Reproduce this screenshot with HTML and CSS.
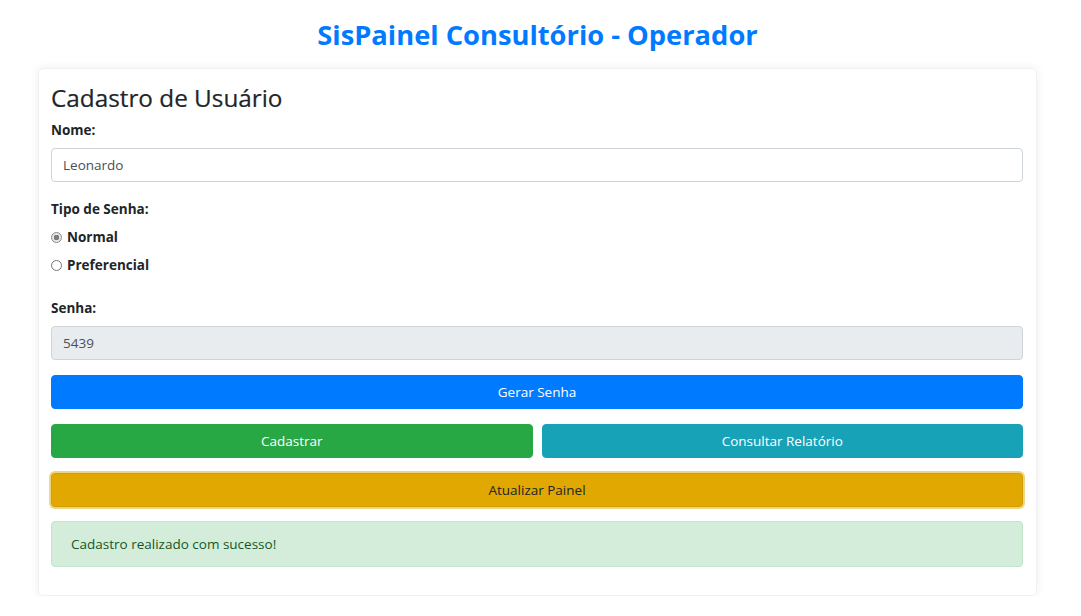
FILE: index.html
```html
<!DOCTYPE html>
<html lang="pt-BR">
<head>
<meta charset="utf-8">
<title>SisPainel Consultório - Operador</title>
<link rel="stylesheet" href="styles.css">
</head>
<body>
  <h1 class="page-title">SisPainel Consultório - Operador</h1>
  <div class="card">
    <h2 class="card-title">Cadastro de Usuário</h2>
    <div class="field">
      <label class="label" for="nome">Nome:</label>
      <input id="nome" class="input" type="text" value="Leonardo">
    </div>
    <div class="field radios">
      <div class="label">Tipo de Senha:</div>
      <label class="radio"><input type="radio" name="tipo" checked> Normal</label>
      <label class="radio"><input type="radio" name="tipo"> Preferencial</label>
    </div>
    <div class="field senha">
      <label class="label" for="senha">Senha:</label>
      <input id="senha" class="input readonly" type="text" value="5439" readonly>
    </div>
    <button class="btn btn-primary">Gerar Senha</button>
    <div class="btn-row">
      <button class="btn btn-success">Cadastrar</button>
      <button class="btn btn-info">Consultar Relatório</button>
    </div>
    <button class="btn btn-warning">Atualizar Painel</button>
    <div class="alert">Cadastro realizado com sucesso!</div>
  </div>
</body>
</html>
```
FILE: styles.css
```css
* { box-sizing: border-box; }
body {
  margin: 0;
  padding: 0 44px 0 38px;
  background: #fff;
  font-family: "Open Sans", "Noto Sans", sans-serif;
  font-size: 14px;
  color: #212529;
}
.page-title {
  margin: 0;
  padding: 14px 0 12px;
  text-align: center;
  color: #007bff;
  font-size: 27.3px;
  line-height: 42px;
  font-weight: 700;
}
.card {
  border: 1px solid #f1f1f1;
  border-radius: 5px;
  box-shadow: 0 0 10px rgba(0,0,0,0.07);
  padding: 13px 13px 28px 12px;
  display: flex;
  flex-direction: column;
}
.card-title {
  margin: 0 0 6px;
  font-size: 24.3px;
  font-weight: 500;
  line-height: 32px;
  color: #212529;
  -webkit-text-stroke: 0.2px #212529;
}
.field { display: flex; flex-direction: column; }
.label {
  font-weight: 700;
  font-size: 13.5px;
  line-height: 20px;
  margin-bottom: 8px;
}
.input {
  height: 34px;
  border: 1px solid #ced4da;
  border-radius: 4px;
  padding: 0 11px;
  font: inherit;
  font-size: 13.5px;
  color: #495057;
  background: #fff;
}
.readonly { background: #e9ecef; }
.radios { margin-top: 17px; }
.radios .label { margin-bottom: 8px; }
.radio {
  display: flex;
  align-items: center;
  gap: 5px;
  font-weight: 700;
  font-size: 13.5px;
  line-height: 20px;
  margin-bottom: 8px;
}
.radio input {
  appearance: none;
  -webkit-appearance: none;
  margin: 0;
  width: 11px;
  height: 11px;
  border: 1px solid #767676;
  border-radius: 50%;
  background: #fff;
}
.radio input:checked {
  border-color: #8a8a8a;
  background: radial-gradient(circle, #7a7a7a 0 2.6px, #e6e6e6 3px);
}
.senha { margin-top: 15px; }
.btn {
  height: 34px;
  border: 1px solid transparent;
  border-radius: 4px;
  font: inherit;
  font-size: 13.5px;
  color: #fff;
  margin-top: 15px;
  width: 100%;
}
.btn-primary { background: #007bff; border-color: #007bff; }
.btn-row { display: flex; gap: 9px; }
.btn-success { background: #28a745; border-color: #28a745; }
.btn-info { background: #17a2b8; border-color: #17a2b8; }
.btn-warning {
  background: #e0a800;
  border-color: #d39e00;
  color: #212529;
  box-shadow: 0 0 0 2px rgba(222,170,12,0.5);
}
.alert {
  margin-top: 14px;
  height: 46px;
  display: flex;
  align-items: center;
  padding: 0 19px;
  background: #d4edda;
  border: 1px solid #c3e6cb;
  border-radius: 4px;
  color: #155724;
  font-size: 13.5px;
}
```
